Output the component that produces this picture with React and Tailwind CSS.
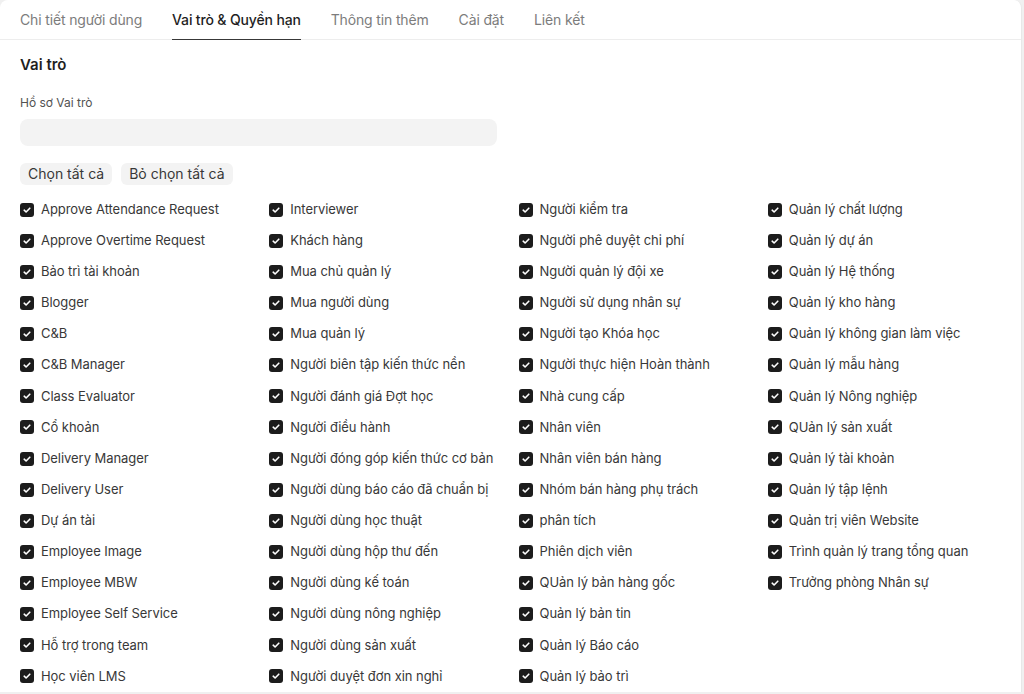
import React from "react";

const cols = [
  [
    "Approve Attendance Request",
    "Approve Overtime Request",
    "Bảo trì tài khoản",
    "Blogger",
    "C&B",
    "C&B Manager",
    "Class Evaluator",
    "Cổ khoản",
    "Delivery Manager",
    "Delivery User",
    "Dự án tài",
    "Employee Image",
    "Employee MBW",
    "Employee Self Service",
    "Hỗ trợ trong team",
    "Học viên LMS",
  ],
  [
    "Interviewer",
    "Khách hàng",
    "Mua chủ quản lý",
    "Mua người dùng",
    "Mua quản lý",
    "Người biên tập kiến thức nền",
    "Người đánh giá Đợt học",
    "Người điều hành",
    "Người đóng góp kiến thức cơ bản",
    "Người dùng báo cáo đã chuẩn bị",
    "Người dùng học thuật",
    "Người dùng hộp thư đến",
    "Người dùng kế toán",
    "Người dùng nông nghiệp",
    "Người dùng sản xuất",
    "Người duyệt đơn xin nghỉ",
  ],
  [
    "Người kiểm tra",
    "Người phê duyệt chi phí",
    "Người quản lý đội xe",
    "Người sử dụng nhân sự",
    "Người tạo Khóa học",
    "Người thực hiện Hoàn thành",
    "Nhà cung cấp",
    "Nhân viên",
    "Nhân viên bán hàng",
    "Nhóm bán hàng phụ trách",
    "phân tích",
    "Phiên dịch viên",
    "QUản lý bản hàng gốc",
    "Quản lý bản tin",
    "Quản lý Báo cáo",
    "Quản lý bảo trì",
  ],
  [
    "Quản lý chất lượng",
    "Quản lý dự án",
    "Quản lý Hệ thống",
    "Quản lý kho hàng",
    "Quản lý không gian làm việc",
    "Quản lý mẫu hàng",
    "Quản lý Nông nghiệp",
    "QUản lý sản xuất",
    "Quản lý tài khoản",
    "Quản lý tập lệnh",
    "Quản trị viên Website",
    "Trình quản lý trang tổng quan",
    "Trưởng phòng Nhân sự",
  ],
];

const tabs = [
  "Chi tiết người dùng",
  "Vai trò & Quyền hạn",
  "Thông tin thêm",
  "Cài đặt",
  "Liên kết",
];

function Check() {
  return (
    <span className="flex h-3.5 w-3.5 shrink-0 items-center justify-center rounded-[3px] bg-[#1c1c1c]">
      <svg viewBox="0 0 14 14" className="h-3.5 w-3.5" fill="none">
        <path
          d="M4.2 7.2 L6.1 9 L9.8 5.2"
          stroke="white"
          strokeWidth="1.6"
          strokeLinecap="round"
          strokeLinejoin="round"
        />
      </svg>
    </span>
  );
}

export default function App() {
  return (
    <div
      className="h-[694px] w-[1024px] overflow-hidden bg-[#f0f0f0]"
      style={{ fontFamily: "Inter, 'Noto Sans', sans-serif" }}
    >
      <div className="h-[692px] w-[1022px] overflow-hidden rounded-tl-lg rounded-tr-lg border-r border-[#e8e8e8] bg-white">
        <div className="flex gap-[30px] border-b border-[#ededed] px-5">
          {tabs.map((t, i) => (
            <div
              key={t}
              className={
                i === 1
                  ? "-mb-px flex h-10 items-center border-b border-[#383838] text-[14px] tracking-[-0.15px] font-medium text-[#1f1f1f]"
                  : "-mb-px flex h-10 items-center border-b border-transparent text-[14px] tracking-[-0.15px] text-[#7c7c7c]"
              }
            >
              {t}
            </div>
          ))}
        </div>
        <div className="px-5 pt-[13px]">
          <div className="h-6 text-[15px] font-semibold leading-6 text-[#1f1f1f]">
            Vai trò
          </div>
          <div className="mt-[18px] h-4 text-[12px] leading-4 text-[#525252]">
            Hồ sơ Vai trò
          </div>
          <div className="mt-[8px] h-[27px] w-[477px] rounded-lg bg-[#f3f3f3]" />
          <div className="mt-[17px] flex gap-[9px]">
            <button className="h-[22px] rounded-md bg-[#f3f3f3] px-2 text-[14px] leading-[22px] text-[#383838]">
              Chọn tất cả
            </button>
            <button className="h-[22px] rounded-md bg-[#f3f3f3] px-2 text-[14px] leading-[22px] text-[#383838]">
              Bỏ chọn tất cả
            </button>
          </div>
          <div className="mt-[9px] grid w-[997px] grid-cols-4">
            {cols.map((col, ci) => (
              <div key={ci} className="flex flex-col">
                {col.map((label) => (
                  <div
                    key={label}
                    className="flex h-[31.13px] items-center gap-[7px] text-[13px] tracking-[-0.05px] text-[#383838]"
                  >
                    <Check />
                    <span className="whitespace-nowrap">{label}</span>
                  </div>
                ))}
              </div>
            ))}
          </div>
        </div>
      </div>
    </div>
  );
}
